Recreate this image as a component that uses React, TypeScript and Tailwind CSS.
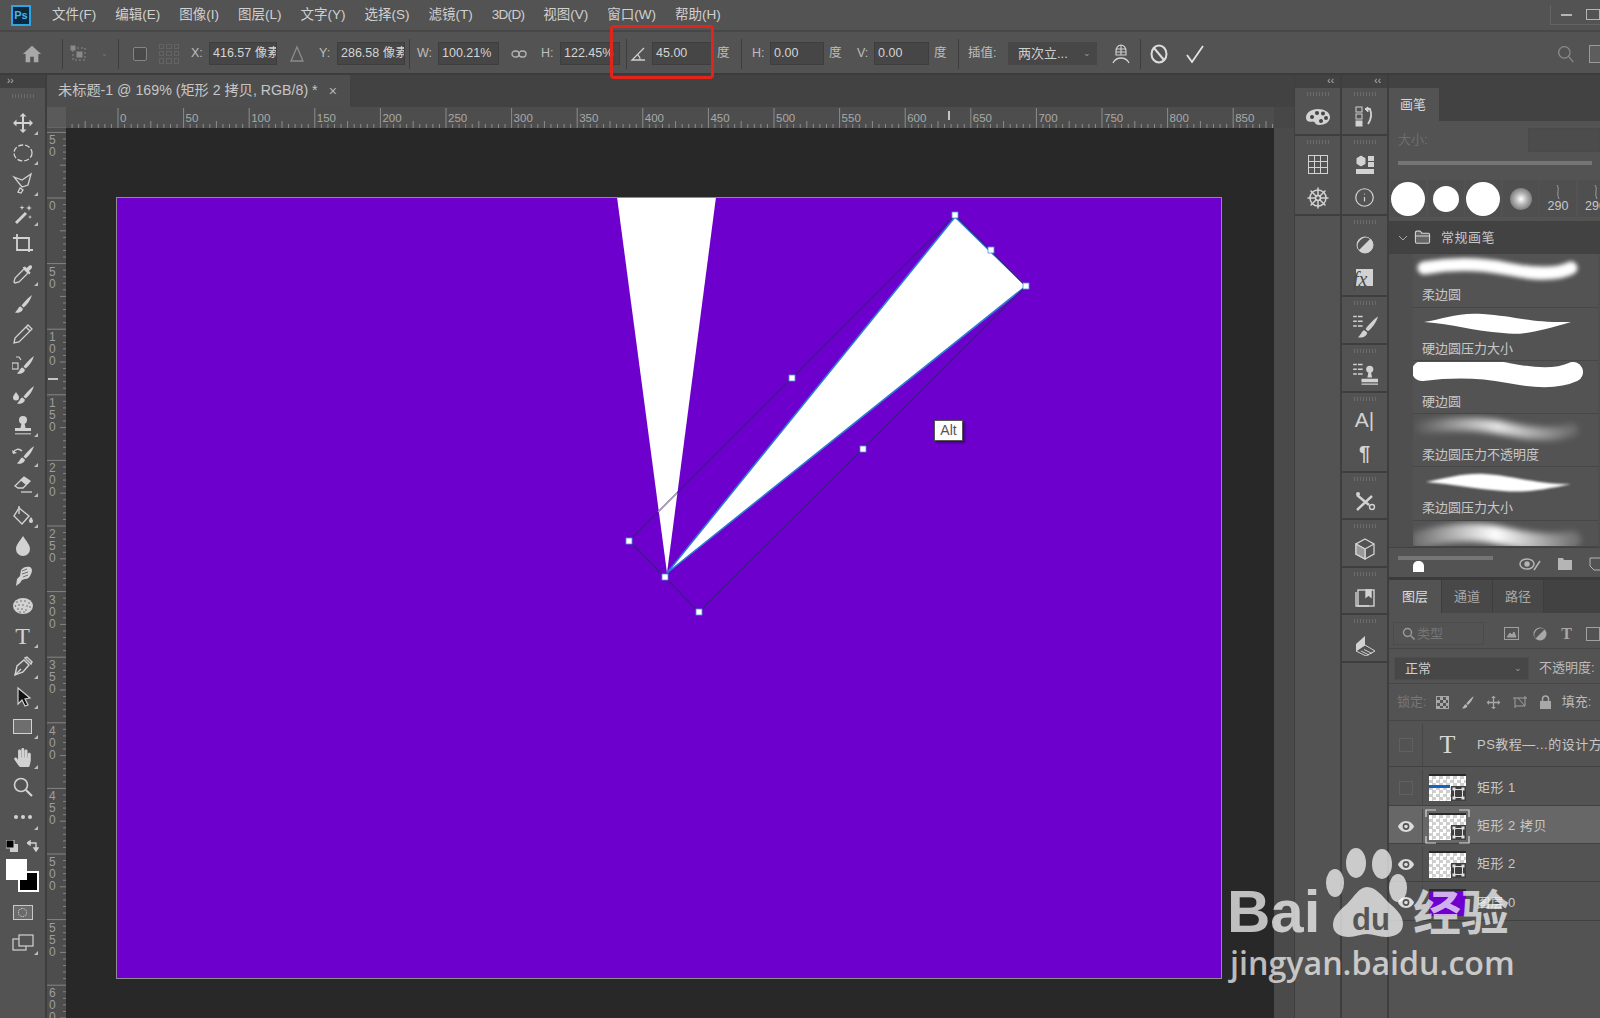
import React from 'react';
import { ShipWheel, Info, FolderClosed } from 'lucide-react';
import { FaHandPaper } from 'react-icons/fa';

const G = '#d2d2d2';

const Svg = ({ s = 22, children }: { s?: number; children: React.ReactNode }) => (
  <svg width={s} height={s} viewBox="0 0 22 22" fill="none" stroke="none">
    {children}
  </svg>
);

// shared brush shape, used by several tools
const BrushShape = ({ x = 0, y = 0 }: { x?: number; y?: number }) => (
  <g transform={`translate(${x} ${y})`}>
    <path d="M20 2 C17 4 12 9 9.5 12.5 L11.5 14.5 C15 12 18.5 7 20 2Z" fill={G} />
    <path d="M8.5 13.5 C6 14 6 17 3 19.5 C7 20.5 11 18.5 10.8 15.5Z" fill={G} />
  </g>
);

const tools: { icon: React.ReactNode; flag?: boolean }[] = [
  { flag: true, icon: <Svg><path d="M11 1l3.5 3.5H12V10h5.5V7.5L21 11l-3.5 3.5V12H12v5.5h2.5L11 21l-3.5-3.5H10V12H4.5v2.5L1 11l3.5-3.5V10H10V4.5H7.5z" fill={G} /></Svg> },
  { flag: true, icon: <Svg><ellipse cx="11" cy="11" rx="9" ry="8" stroke={G} strokeWidth="1.3" strokeDasharray="5 2" /></Svg> },
  { flag: true, icon: <Svg><path d="M2 5l8 3 9-6-3 11-6 2zM8 16l-2 4 3 1 2-3-3-2z" stroke={G} strokeWidth="1.3" /></Svg> },
  { flag: true, icon: <Svg><path d="M3 19l10-10 2 2-10 10z" fill={G} /><path d="M10 2l.6 2 2 .6-2 .6-.6 2-.6-2-2-.6 2-.6zM17 2l.8 2.3 2.2.7-2.2.7L17 8l-.8-2.3L14 5l2.2-.7zM18 12l.5 1.5 1.5.5-1.5.5-.5 1.5-.5-1.5L16 14l1.5-.5z" fill={G} /></Svg> },
  { icon: <Svg><path d="M1 5h16v14M5 1v16h16" stroke={G} strokeWidth="1.8" /></Svg> },
  { flag: true, icon: <Svg><path d="M12 6l4 4-9 9-4 1-1-1 1-4z" stroke={G} strokeWidth="1.3" /><path d="M10.500 4.500l7 7 1-2-1.500-1.500 2.500-2.500c1.500-2 0-4-2-3l-3 2.500-1.500-1.500z" fill={G} /></Svg> },
  { icon: <Svg><BrushShape /></Svg> },
  { icon: <Svg><path d="M16 2l4 4L7 19l-5 1 1-5zM14 4l4 4" stroke={G} strokeWidth="1.3" /></Svg> },
  { icon: <Svg><BrushShape x={2} /><rect x="0" y="9" width="6" height="6" stroke={G} strokeWidth="1.2" /><path d="M4 3h3l2 3" stroke={G} strokeWidth="1.2" /></Svg> },
  { icon: <Svg><BrushShape x={2} /><path d="M4 8c2 3 3 4 3 5.5a3 3 0 01-6 0C1 12 2 11 4 8z" fill={G} /></Svg> },
  { flag: true, icon: <Svg><circle cx="11" cy="6" r="4" fill={G} /><path d="M9.5 9h3l1 5h-5z" fill={G} /><path d="M3 14h16v3H3z" fill={G} /><path d="M3 19h16v1.5H3z" fill="#aaa" /></Svg> },
  { flag: true, icon: <Svg><BrushShape x={2} /><path d="M1 9c2-4 6-5 9-2" stroke={G} strokeWidth="1.3" /><path d="M0 6l1 4 4-1z" fill={G} /></Svg> },
  { flag: true, icon: <Svg><path d="M12 3l6 4-7 7H6L3 12z" stroke={G} strokeWidth="1.3" /><path d="M12 3l6 4-4 4-6-5z" fill={G} /><path d="M9 18h11" stroke={G} strokeWidth="1.3" /></Svg> },
  { flag: true, icon: <Svg><path d="M7 3l10 8-7 8-8-8z" stroke={G} strokeWidth="1.4" /><path d="M7 1v8" stroke={G} strokeWidth="1.4" /><path d="M19 12c1.4 2 2 3 2 4a2 2 0 01-4 0c0-1 .6-2 2-4z" fill={G} /></Svg> },
  { icon: <Svg><path d="M11 1c3 5 7 8.500 7 13a7 7 0 01-14 0c0-4.500 4-8 7-13z" fill={G} /></Svg> },
  { icon: <Svg><path d="M4 21l1-7 3-3 1-6c2-3 6-4 9-3 3 2 2 5 1 7-1 3-3 5-6 5l-3 1-2 3z" fill={G} /><path d="M10 6l5-2M10 9l6-2M11 12l5-2" stroke="#535353" strokeWidth="0.800" /></Svg> },
  { icon: <Svg><ellipse cx="11" cy="11" rx="10" ry="8" fill={G} /><path d="M5 7h.01M9 6h.01M13 6h.01M17 8h.01M3.500 11h.01M7 10h.01M11 10h.01M15 11h.01M18 12h.01M6 14h.01M10 14h.01M14 15h.01M8 17h.01M12 17h.01" stroke="#555" strokeWidth="1.400" strokeLinecap="round" /></Svg> },
  { flag: true, icon: <span className="font-['Liberation_Serif',serif] text-[#d2d2d2] text-[24px] leading-none">T</span> },
  { flag: true, icon: <Svg><path d="M3 20l2-9 7-6 5 5-6 7z" stroke={G} strokeWidth="1.4" /><path d="M13 3l2-1 5 5-1 2zM3 20l6-6" stroke={G} strokeWidth="1.4" /></Svg> },
  { flag: true, icon: <Svg><path d="M6 2l12 10-5 1 3 6-3 1-3-6-4 4z" fill="#111" stroke={G} strokeWidth="1.200" /></Svg> },
  { flag: true, icon: <div className="w-[19px] h-[15px] border border-[#d2d2d2] bg-[#6e6e6e]" /> },
  { flag: true, icon: <FaHandPaper size={19} color={G} /> },
  { icon: <Svg><circle cx="9" cy="9" r="6.500" stroke={G} strokeWidth="1.600" /><path d="M14 14l6 6" stroke={G} strokeWidth="2.200" /></Svg> },
  { flag: true, icon: <Svg><circle cx="4" cy="11" r="2" fill={G} /><circle cx="11" cy="11" r="2" fill={G} /><circle cx="18" cy="11" r="2" fill={G} /></Svg> },
];

const Flag = () => (
  <span className="absolute right-[7px] bottom-[3px] w-0 h-0 border-l-[4px] border-l-transparent border-b-[4px] border-b-[#bdbdbd]" />
);

const Grip = () => (
  <div className="w-[22px] h-[4px] bg-[repeating-linear-gradient(90deg,#6c6c6c_0,#6c6c6c_1px,transparent_1px,transparent_3px)]" />
);

const ToolColumn = () => (
  <div className="w-[47px] shrink-0 border-r-2 border-[#3d3d3d] bg-[#535353] flex flex-col">
    <div className="h-[13px] bg-[#424242] text-[10px] leading-[12px] text-[#bbb] pl-[7px]">››</div>
    <div className="h-[20px] pt-[6px] flex justify-center"><Grip /></div>
    {tools.map((t, i) => (
      <div key={i} className="relative h-[30.2px] shrink-0 flex items-center justify-center">
        {t.icon}
        {t.flag && <Flag />}
      </div>
    ))}
    <div className="h-[26px] shrink-0 flex items-center justify-between px-[6px]">
      <svg width="12" height="12" viewBox="0 0 12 12"><rect x="4" y="4" width="8" height="8" fill="#ccc" /><rect x="0" y="0" width="8" height="8" fill="#000" stroke="#ccc" /></svg>
      <svg width="12" height="12" viewBox="0 0 12 12" fill="none" stroke={G} strokeWidth="1.400"><path d="M1 3h8v7M0 3l3-2v4zM9 11l-2-3h4z" /></svg>
    </div>
    <div className="relative h-[33px] shrink-0">
      <div className="absolute left-[18px] top-[12px] w-[21px] h-[21px] bg-black border-2 border-white" />
      <div className="absolute left-[6px] top-0 w-[21px] h-[21px] bg-white" />
    </div>
    <div className="mt-[6px] h-[30px] flex items-center justify-center">
      <div className="w-[20px] h-[15px] border border-[#c8c8c8] bg-[#6a6a6a] flex items-center justify-center">
        <div className="w-[9px] h-[9px] rounded-full border border-dotted border-[#e0e0e0]" />
      </div>
    </div>
    <div className="relative h-[30px] flex items-center justify-center">
      <Svg><rect x="1" y="7" width="13" height="11" stroke={G} strokeWidth="1.200" /><rect x="7" y="3" width="14" height="11" fill="#535353" stroke={G} strokeWidth="1.200" /></Svg>
      <Flag />
    </div>
  </div>
);

const Field = ({ w, children }: { w: string; children?: React.ReactNode }) => (
  <div className={`${w} h-[23px] shrink-0 bg-[#464646] border border-[#3e3e3e] text-[#d4d4d4] text-[12.500px] leading-[21px] pl-[3px] overflow-hidden whitespace-nowrap`}>
    {children}
  </div>
);

const Sep = ({ m }: { m: string }) => <div className={`${m} w-px h-[30px] bg-[#3d3d3d] shrink-0`} />;

const Lbl = ({ m, w, children }: { m: string; w: string; children: React.ReactNode }) => (
  <span className={`${m} ${w} shrink-0 text-[12.500px] text-[#bdbdbd] whitespace-nowrap`}>{children}</span>
);

const OptionsBar = () => (
  <div className="h-[43px] shrink-0 flex items-center pt-[2px] bg-[#535353] border-b-2 border-[#3c3c3c]">
    <div className="ml-[22px] w-[20px] shrink-0">
      <Svg s={20}><path d="M11 2L1 11h3v9h5v-6h4v6h5v-9h3z" fill="#a8a8a8" /></Svg>
    </div>
    <Sep m="ml-[20px]" />
    <div className="ml-[7px] w-[18px] shrink-0">
      <svg width="18" height="18" viewBox="0 0 18 18" fill="none" stroke="#8a8a8a"><rect x="3" y="3" width="12" height="12" strokeDasharray="2 2" /><rect x="1" y="1" width="4" height="4" fill="#8a8a8a" /><rect x="7" y="7" width="5" height="5" fill="#8a8a8a" /></svg>
    </div>
    <div className="ml-[13px] w-[8px] shrink-0 text-[#777] text-[8px]">⌄</div>
    <Sep m="ml-[9px]" />
    <div className="ml-[14px] w-[14px] h-[14px] shrink-0 rounded-[2px] border border-[#858585] bg-[#4a4a4a]" />
    <div className="ml-[12px] w-[20px] h-[20px] shrink-0 grid grid-cols-3 gap-[2px] opacity-60">
      {Array.from({ length: 9 }).map((_, i) => (
        <div key={i} className="border border-[#6f6f6f]" />
      ))}
    </div>
    <Lbl m="ml-[12px]" w="w-[14px]">X:</Lbl>
    <div className="ml-[4px]"><Field w="w-[68px]">416.57 像素</Field></div>
    <div className="ml-[12px] w-[16px] shrink-0">
      <svg width="16" height="18" viewBox="0 0 16 18" fill="none" stroke="#8c8c8c" strokeWidth="1.300"><path d="M8 2L2 16h12z" /></svg>
    </div>
    <Lbl m="ml-[14px]" w="w-[14px]">Y:</Lbl>
    <div className="ml-[4px]"><Field w="w-[68px]">286.58 像素</Field></div>
    <Sep m="ml-[4px]" />
    <Lbl m="ml-[7px]" w="w-[18px]">W:</Lbl>
    <div className="ml-[3px]"><Field w="w-[61px]">100.21%</Field></div>
    <div className="ml-[12px] w-[16px] shrink-0">
      <svg width="16" height="10" viewBox="0 0 16 10" fill="none" stroke="#b4b4b4" strokeWidth="1.300"><rect x="1" y="2" width="7" height="6" rx="3" /><rect x="8" y="2" width="7" height="6" rx="3" /></svg>
    </div>
    <Lbl m="ml-[14px]" w="w-[14px]">H:</Lbl>
    <div className="ml-[5px]"><Field w="w-[60px]">122.45%</Field></div>
    <Sep m="ml-[6px]" />
    <div className="ml-[3px] w-[16px] shrink-0">
      <svg width="16" height="16" viewBox="0 0 16 16" fill="none" stroke="#d0d0d0" strokeWidth="1.300"><path d="M14 2L2 14h13M10 14a6 6 0 00-2-5" /></svg>
    </div>
    <div className="ml-[6px]"><Field w="w-[60px]">45.00</Field></div>
    <Lbl m="ml-[5px]" w="w-[14px]">度</Lbl>
    <Sep m="ml-[10px]" />
    <Lbl m="ml-[10px]" w="w-[14px]">H:</Lbl>
    <div className="ml-[4px]"><Field w="w-[54px]">0.00</Field></div>
    <Lbl m="ml-[5px]" w="w-[14px]">度</Lbl>
    <Lbl m="ml-[14px]" w="w-[13px]">V:</Lbl>
    <div className="ml-[4px]"><Field w="w-[55px]">0.00</Field></div>
    <Lbl m="ml-[5px]" w="w-[14px]">度</Lbl>
    <Sep m="ml-[10px]" />
    <Lbl m="ml-[9px]" w="w-[33px]">插值:</Lbl>
    <div className="ml-[7px] w-[89px] h-[23px] shrink-0 bg-[#474747] text-[13px] text-[#cfcfcf] leading-[23px] pl-[10px] relative">
      两次立...
      <span className="absolute right-[6px] top-0 text-[#9a9a9a] text-[9px]">⌄</span>
    </div>
    <div className="ml-[13px] w-[22px] shrink-0">
      <Svg>
        <path d="M6 8c0-3 2-6 5-6s5 3 5 6v4H6zM6 6h10M11 2v10M6 9h10" stroke={G} strokeWidth="1.100" />
        <path d="M3 20c2-4 4-5 8-5s6 1 8 5" stroke={G} strokeWidth="1.300" />
      </Svg>
    </div>
    <Sep m="ml-[8px]" />
    <div className="ml-[8px] w-[20px] shrink-0">
      <svg width="20" height="20" viewBox="0 0 20 20" fill="none" stroke="#dcdcdc" strokeWidth="2"><ellipse cx="10" cy="10" rx="7.500" ry="8.500" /><path d="M5 4l10 12" /></svg>
    </div>
    <div className="ml-[16px] w-[20px] shrink-0">
      <svg width="20" height="20" viewBox="0 0 20 20" fill="none" stroke="#e4e4e4" strokeWidth="1.800"><path d="M2 11l5 7L18 2" /></svg>
    </div>
    <div className="ml-auto flex items-center">
      <Svg s={18}><circle cx="9" cy="9" r="7" stroke="#8d8d8d" strokeWidth="1.500" /><path d="M14 14l6 7" stroke="#8d8d8d" strokeWidth="1.500" /></Svg>
      <div className="ml-[14px] -mr-[3px] w-[14px] h-[18px] border border-[#9a9a9a] bg-[#5d5d5d]" />
    </div>
  </div>
);

const MENU = ['文件(F)', '编辑(E)', '图像(I)', '图层(L)', '文字(Y)', '选择(S)', '滤镜(T)', '3D(D)', '视图(V)', '窗口(W)', '帮助(H)'];

const MenuBar = () => (
  <div className="h-[32px] shrink-0 flex items-center bg-[#535353] border-b-2 border-[#474747]">
    <div className="ml-[11px] w-[20px] h-[21px] border-2 border-[#2fa3e6] bg-[#0b2a3e] text-[#4cb5f0] text-[11px] font-bold leading-[17px] text-center">Ps</div>
    <div className="ml-[21px] flex gap-[19px] text-[13.500px] text-[#d0d0d0]">
      {MENU.map((m) => (
        <span key={m} className={`whitespace-nowrap ${m === '3D(D)' ? 'tracking-[-0.700px]' : ''}`}>{m}</span>
      ))}
    </div>
    <div className="ml-auto flex items-center h-[20px] border-l border-b border-[#636363] pl-[10px] gap-[14px]">
      <div className="w-[11px] h-[2px] bg-[#b5b5b5]" />
      <div className="w-[14px] h-[11px] border border-[#b5b5b5]" />
    </div>
  </div>
);

const H_STEP = 65.6;
const H_ZERO = 52;

const HRuler = () => {
  const ticks: React.ReactNode[] = [];
  for (let i = -8; i < 180; i++) {
    const x = H_ZERO + i * (H_STEP / 10);
    const major = i % 10 === 0;
    const mid = Math.abs(i % 10) === 5;
    ticks.push(<line key={i} x1={x} x2={x} y1={major ? 1 : mid ? 14 : 17} y2={21} stroke="#8c8c8c" />);
  }
  const labels: React.ReactNode[] = [];
  for (let i = 0; i <= 17; i++) {
    labels.push(
      <text key={i} x={H_ZERO + i * H_STEP + 2} y={15} fill="#a9a9a9" fontSize="11.500">{i * 50}</text>,
    );
  }
  return (
    <div className="h-[21px] shrink-0 flex bg-[#4d4d4d]">
      <div className="w-[19px] shrink-0 bg-[#5a5a5a] border-b border-[#666]" />
      <svg width="1208" height="21" className="shrink-0">
        {ticks}
        {labels}
        <line x1={883} x2={883} y1={4} y2={13} stroke="#ededed" strokeWidth="1.500" />
      </svg>
      <div className="flex-1 bg-[#474747]" />
    </div>
  );
};

const VRuler = () => {
  const zero = 70;
  const step = 65.6;
  const ticks: React.ReactNode[] = [];
  for (let i = -10; i < 140; i++) {
    const y = zero + i * (step / 10);
    const major = i % 10 === 0;
    const mid = Math.abs(i % 10) === 5;
    ticks.push(<line key={i} y1={y} y2={y} x1={major ? 0 : mid ? 13 : 16} x2={19} stroke="#858585" />);
  }
  const labels: React.ReactNode[] = [];
  for (let i = -1; i <= 12; i++) {
    const digits = String(Math.abs(i) * 50).split('');
    digits.forEach((d, j) => {
      labels.push(
        <text key={`${i}-${j}`} x={2} y={zero + i * step + 12 + j * 12} fill="#9d9d9d" fontSize="12">{d}</text>,
      );
    });
  }
  return (
    <svg width="19" height="890" className="shrink-0 bg-[#4d4d4d]">
      {ticks}
      {labels}
      <line x1={1} x2={11} y1={251} y2={251} stroke="#ededed" strokeWidth="1.500" />
    </svg>
  );
};

const Handle = ({ x, y }: { x: number; y: number }) => (
  <rect x={x - 3} y={y - 3} width="6" height="6" fill="#fff" stroke="#4f8fdc" strokeWidth="0.800" />
);

// coordinates are relative to the document's top left corner
const DocumentArt = () => (
  <svg width="1104" height="780" className="absolute inset-0">
    <g transform="translate(-1 -1)">
      <polygon points="501,0 600,0 551,376" fill="#fff" />
      <polygon points="551,376 839,20 910,89" fill="#fff" stroke="#2c7bd6" strokeWidth="1.600" />
      <polyline points="513,344 839,18 910,89 583,415 513,344" fill="none" stroke="#3f1a8a" strokeWidth="1.300" />
      <line x1="542" y1="315" x2="561" y2="296" stroke="#aaa" strokeWidth="1.200" />
      <Handle x={839} y={18} />
      <Handle x={875} y={53} />
      <Handle x={910} y={89} />
      <Handle x={676} y={181} />
      <Handle x={747} y={252} />
      <Handle x={513} y={344} />
      <Handle x={549} y={380} />
      <Handle x={583} y={415} />
    </g>
  </svg>
);

const CenterColumn = () => (
  <div className="w-[1247px] shrink-0 flex flex-col bg-[#424242]">
    <div className="h-[32px] shrink-0 flex">
      <div className="w-[303px] bg-[#4e4e4e] flex items-center pl-[11px] pr-[13px] text-[14.200px] text-[#c6c6c6]">
        <span className="whitespace-nowrap">未标题-1 @ 169% (矩形 2 拷贝, RGB/8) *</span>
        <span className="ml-auto text-[#b5b5b5] text-[14px]">×</span>
      </div>
    </div>
    <HRuler />
    <div className="flex-1 flex overflow-hidden">
      <VRuler />
      <div className="w-[1208px] shrink-0 bg-[#282828] pl-[51px] pt-[70px]">
        <div className="relative w-[1104px] h-[780px] bg-[#6e00cd] outline outline-1 outline-[#8f8f8f]">
          <DocumentArt />
          <div className="absolute left-[817px] top-[222px] w-[29px] h-[21px] bg-white border border-[#555] shadow-[2px_2px_2px_rgba(0,0,0,0.4)] text-[14px] text-[#555] leading-[19px] text-center">Alt</div>
        </div>
      </div>
      <div className="flex-1 bg-[#4a4a4a]" />
    </div>
  </div>
);

const IconGroup = ({ h, items }: { h: string; items: React.ReactNode[] }) => (
  <div className={`${h} shrink-0 flex flex-col items-center pt-[4px] border-b-2 border-[#3e3e3e]`}>
    <Grip />
    <div className="h-[4px]" />
    {items.map((it, i) => (
      <div key={i} className="h-[33px] flex items-center justify-center">{it}</div>
    ))}
  </div>
);

const ListBrush = ({ stamp }: { stamp?: boolean }) => (
  <Svg s={26}>
    <path d="M1 3h3M1 7h3M1 11h3" stroke={G} strokeWidth="1.200" />
    <path d="M5 3h4M5 7h4M5 11h4" stroke={G} strokeWidth="1.200" />
    {stamp ? (
      <g><circle cx="15" cy="7" r="3" fill={G} /><path d="M14 9h2l1 5h-4zM8 15h14v3H8zM8 19h14v1H8z" fill={G} /></g>
    ) : (
      <BrushShape x={2} y={1} />
    )}
  </Svg>
);

const ColumnA = () => (
  <div className="w-[45px] shrink-0 flex flex-col">
    <div className="h-[13px] shrink-0 bg-[#424242] text-[#bbb] text-[10px] leading-[12px] text-right pr-[6px]">‹‹</div>
    <IconGroup h="h-[48px]" items={[
      <svg width="24" height="18" viewBox="0 0 24 18" key="p">
        <path d="M12 1C5 1 0 5 0 9.500 0 14 4 14 7 13.500c2 0 2 3.500 6 3.500 6 0 11-3 11-8S18 1 12 1z" fill={G} />
        <circle cx="6" cy="9" r="2" fill="#444" /><circle cx="11" cy="5" r="2" fill="#444" /><circle cx="17" cy="5.500" r="2" fill="#444" /><circle cx="20" cy="10" r="2" fill="#444" /><circle cx="15" cy="13" r="2" fill="#444" />
      </svg>,
    ]} />
    <IconGroup h="h-[80px]" items={[
      <div key="g" className="w-[20px] h-[19px] grid grid-cols-3 gap-px border border-[#d2d2d2] bg-[#d2d2d2]">
        {Array.from({ length: 9 }).map((_, i) => <div key={i} className="bg-[#535353]" />)}
      </div>,
      <ShipWheel key="s" size={24} color={G} strokeWidth={1.5} />,
    ]} />
  </div>
);

const ColumnB = () => (
  <div className="w-[45px] shrink-0 flex flex-col">
    <div className="h-[13px] shrink-0 bg-[#424242] text-[#bbb] text-[10px] leading-[12px] text-right pr-[6px]">‹‹</div>
    <IconGroup h="h-[48px]" items={[
      <svg width="20" height="21" viewBox="0 0 20 21" key="h" fill="none" stroke={G}>
        <rect x="1" y="1" width="6" height="5" /><rect x="1" y="8" width="6" height="5" /><rect x="1" y="15" width="6" height="5" fill={G} />
        <path d="M10 3h5c2 5 2 9-2 15" strokeWidth="1.800" /><path d="M13 1l-3 2 3 3z" fill={G} />
      </svg>,
    ]} />
    <IconGroup h="h-[80px]" items={[
      <svg width="20" height="20" viewBox="0 0 20 20" key="c" fill={G}>
        <path d="M1 3l5-3 5 3v6l-5 3-5-3z" stroke="#535353" />
        <rect x="13" y="1" width="6" height="5" /><rect x="13" y="7" width="6" height="5" /><rect x="1" y="14" width="18" height="5" />
      </svg>,
      <Info key="i" size={21} color={G} strokeWidth={1.400} />,
    ]} />
    <IconGroup h="h-[81px]" items={[
      <svg width="18" height="18" viewBox="0 0 18 18" key="a"><circle cx="9" cy="9" r="8" fill={G} stroke={G} /><path d="M3 14L14 3A8 8 0 003 14z" fill="#535353" /></svg>,
      <div key="f" className="relative w-[17px] h-[17px] bg-[#d2d2d2]">
        <span className="absolute -left-[3px] top-[-1px] text-[20px] italic text-[#4c4c4c] font-['Liberation_Serif',serif] leading-[22px]">fx</span>
      </div>,
    ]} />
    <IconGroup h="h-[48px]" items={[<ListBrush key="b" />]} />
    <IconGroup h="h-[48px]" items={[<ListBrush key="s" stamp />]} />
    <IconGroup h="h-[80px]" items={[
      <span key="a" className="text-[21px] -mt-[4px] text-[#d2d2d2] leading-none">A<span className="font-light">|</span></span>,
      <span key="p" className="text-[20px] -mt-[4px] text-[#d2d2d2] leading-none font-bold">¶</span>,
    ]} />
    <IconGroup h="h-[47px]" items={[
      <svg width="22" height="22" viewBox="0 0 22 22" key="t" fill="none" stroke={G} strokeWidth="2.400"><path d="M3 19L18 5M3 4l12 10" /><circle cx="18" cy="16" r="2.500" strokeWidth="1.400" /><circle cx="4" cy="3" r="2" fill={G} stroke="none" /></svg>,
    ]} />
    <IconGroup h="h-[48px]" items={[
      <svg width="20" height="22" viewBox="0 0 20 22" key="c" stroke={G} strokeWidth="1.300" fill="none"><path d="M10 1l9 5v10l-9 5-9-5V6z" /><path d="M10 11l9-5M10 11L1 6M10 11v10" /><path d="M10 11L1 6v10l9 5z" fill="#9a9a9a" /></svg>,
    ]} />
    <IconGroup h="h-[47px]" items={[
      <svg width="20" height="20" viewBox="0 0 20 20" key="l" fill="none" stroke={G} strokeWidth="1.400"><rect x="3" y="3" width="16" height="16" /><path d="M1 5v14h13" /><path d="M11 3h5v7l-2.500-2L11 10z" fill={G} /></svg>,
    ]} />
    <IconGroup h="h-[48px]" items={[
      <svg width="24" height="24" viewBox="0 0 24 24" key="b"><path d="M3 12l9-8v9l-9 6z" fill={G} /><path d="M3 19l9-6 10 6-9 5z" fill="none" stroke={G} strokeWidth="1" /><path d="M8 19l8 4M11 17.500l8 4" stroke={G} /></svg>,
    ]} />
  </div>
);

const brushRows: { label: string; h: string; art: React.ReactNode }[] = [
  {
    label: '柔边圆', h: 'h-[54px]',
    art: <svg width="185" height="32" viewBox="0 0 185 32" className="blur-[2px]"><path d="M11 13C40 8 70 9 95 14s50 6 63-1" fill="none" stroke="#fff" strokeWidth="13" strokeLinecap="round" /></svg>,
  },
  {
    label: '硬边圆压力大小', h: 'h-[53px]',
    art: <svg width="185" height="32" viewBox="0 0 185 32"><path d="M11 13C30 10 45 3 70 5c30 2 50 9 88 8-28 8-48 14-68 11C60 22 40 15 11 13z" fill="#fff" /></svg>,
  },
  {
    label: '硬边圆', h: 'h-[53px]',
    art: <svg width="185" height="32" viewBox="0 0 185 32"><path d="M9 9C40 5 70 6 95 11s50 6 65 -1" fill="none" stroke="#fff" strokeWidth="20" strokeLinecap="round" /></svg>,
  },
  {
    label: '柔边圆压力不透明度', h: 'h-[53px]',
    art: (
      <svg width="185" height="32" viewBox="0 0 185 32" className="blur-[3px]">
        <defs><linearGradient id="fadeA"><stop offset="0" stopColor="#fff" stopOpacity="0.100" /><stop offset="0.500" stopColor="#fff" stopOpacity="0.850" /><stop offset="1" stopColor="#fff" stopOpacity="0.150" /></linearGradient></defs>
        <path d="M10 12C40 8 70 8 95 14s50 6 64 1" fill="none" stroke="url(#fadeA)" strokeWidth="13" strokeLinecap="round" />
      </svg>
    ),
  },
  {
    label: '柔边圆压力大小', h: 'h-[54px]',
    art: <svg width="185" height="32" viewBox="0 0 185 32" className="blur-[1px]"><path d="M13 14C35 10 50 5 72 6c30 2 50 10 86 10-28 6-48 9-68 7C60 21 40 16 13 14z" fill="#fff" /></svg>,
  },
  {
    label: '', h: 'h-[26px]',
    art: (
      <svg width="185" height="32" viewBox="0 0 185 32" className="blur-[3px]">
        <defs><linearGradient id="fadeB"><stop offset="0" stopColor="#fff" stopOpacity="0.200" /><stop offset="0.500" stopColor="#fff" stopOpacity="1" /><stop offset="1" stopColor="#fff" stopOpacity="0.200" /></linearGradient></defs>
        <path d="M6 18C40 8 70 9 95 15s50 7 64 3" fill="none" stroke="url(#fadeB)" strokeWidth="18" strokeLinecap="round" />
      </svg>
    ),
  },
];

const PresetCell = ({ children }: { children?: React.ReactNode }) => (
  <div className="w-[36px] h-[37px] shrink-0 bg-[#4f4f4f] flex flex-col items-center justify-center">{children}</div>
);

const Stroke290 = () => (
  <>
    <svg width="6" height="14" viewBox="0 0 6 14" fill="none" stroke="#9e9e9e"><path d="M2 0c3 4-1 8 2 14" /></svg>
    <span className="text-[12.500px] leading-[14px] text-[#c8c8c8]">290</span>
  </>
);

const BrushPanel = () => (
  <div className="flex flex-col">
    <div className="h-[33px] shrink-0 flex bg-[#424242]">
      <div className="w-[50px] bg-[#535353] text-[13px] text-[#d8d8d8] leading-[33px] pl-[11px]">画笔</div>
    </div>
    <div className="h-[59px] shrink-0 flex flex-col">
      <div className="mt-[7px] h-[24px] flex items-center">
        <span className="ml-[9px] text-[13px] text-[#6f6f6f]">大小:</span>
        <div className="ml-auto w-[72px] h-full bg-[#4c4c4c] border border-[#4a4a4a]" />
      </div>
      <div className="mt-[9px] ml-[9px] w-[194px] h-[4px] bg-[#757575]" />
    </div>
    <div className="h-[41px] shrink-0 flex gap-[1.500px] pl-px">
      <PresetCell><div className="w-[34px] h-[34px] rounded-full bg-white blur-[0.500px]" /></PresetCell>
      <PresetCell><div className="w-[26px] h-[26px] rounded-full bg-white blur-[0.500px]" /></PresetCell>
      <PresetCell><div className="w-[34px] h-[34px] rounded-full bg-white blur-[0.500px]" /></PresetCell>
      <PresetCell><div className="w-[22px] h-[22px] rounded-full bg-[radial-gradient(circle,#fff_0,#b0b0b0_40%,#4f4f4f_100%)]" /></PresetCell>
      <PresetCell><Stroke290 /></PresetCell>
      <PresetCell><Stroke290 /></PresetCell>
    </div>
    <div className="h-[33px] shrink-0 bg-[#424242] flex items-center text-[13px] text-[#c8c8c8]">
      <svg className="ml-[9px]" width="10" height="6" viewBox="0 0 10 6" fill="none" stroke="#aaa"><path d="M1 1l4 4 4-4" /></svg>
      <FolderClosed className="ml-[6px]" size={17} color="#d4d4d4" fill="#d4d4d4" fillOpacity={0.25} strokeWidth={1.500} />
      <span className="ml-[10px] tracking-[0.500px]">常规画笔</span>
    </div>
    <div className="h-[293px] shrink-0 overflow-hidden pl-[24px] bg-[#4f4f4f]">
      {brushRows.map((r, i) => (
        <div key={i} className={`${r.h} w-[185px] bg-[#535353] border-b border-[#474747] flex flex-col overflow-hidden`}>
          <div className="h-[32px] shrink-0 pt-[1px]">{r.art}</div>
          {r.label && <div className="pl-[9px] text-[13px] text-[#c8c8c8] leading-[17px] whitespace-nowrap">{r.label}</div>}
        </div>
      ))}
    </div>
    <div className="relative h-[33px] shrink-0 border-t border-[#424242] border-b-[3px] border-b-[#3b3b3b]">
      <div className="absolute left-[9px] top-[8px] w-[95px] h-[4px] bg-[#757575]" />
      <div className="absolute left-[24px] top-[13px] w-[11px] h-[11px] bg-white rounded-t-[5px]" />
      <div className="absolute left-[130px] top-[9px] flex items-center gap-[16px]">
        <svg width="22" height="14" viewBox="0 0 22 14" fill="none" stroke="#b5b5b5" strokeWidth="1.500"><ellipse cx="8" cy="7" rx="7" ry="5" /><circle cx="8" cy="7" r="2" fill="#b5b5b5" /><path d="M15 13l6-9" /></svg>
        <svg width="16" height="14" viewBox="0 0 16 14" fill="#b5b5b5"><path d="M1 1h5l1 2h8v10H1z" /></svg>
        <svg width="16" height="14" viewBox="0 0 16 14" fill="none" stroke="#b5b5b5"><path d="M1 1h14v12H5l-4-4z" /></svg>
      </div>
    </div>
  </div>
);

const Checker = "bg-[conic-gradient(#cfcfcf_25%,#fff_0_50%,#cfcfcf_0_75%,#fff_0)] bg-[length:7px_7px]";

const Thumb = ({ line, purple }: { line?: boolean; purple?: boolean }) => (
  <div className={`relative w-[37px] h-[27px] shrink-0 border-t-2 border-[#2a2a2a] ${purple ? 'bg-[#6e00cd]' : Checker}`}>
    {line && <div className="absolute left-0 top-[9px] w-[21px] h-[3px] bg-[#1263c4]" />}
    {!purple && (
      <div className="absolute right-0 bottom-0 w-[15px] h-[15px] bg-[#3f3f3f] flex items-center justify-center">
        <svg width="13" height="13" viewBox="0 0 13 13" fill="none" stroke="#e0e0e0"><rect x="2.500" y="2.500" width="8" height="8" /><rect x="1" y="1" width="2" height="2" fill="#e0e0e0" /><rect x="10" y="1" width="2" height="2" fill="#e0e0e0" /><rect x="1" y="10" width="2" height="2" fill="#e0e0e0" /><rect x="10" y="10" width="2" height="2" fill="#e0e0e0" /></svg>
      </div>
    )}
  </div>
);

const Eye = () => (
  <svg width="16" height="11" viewBox="0 0 16 11"><path d="M8 0C4 0 1 3 0 5.500 1 8 4 11 8 11s7-3 8-5.500C15 3 12 0 8 0z" fill="#dcdcdc" /><circle cx="8" cy="5.500" r="3.400" fill="#535353" /><circle cx="8" cy="5.500" r="1.800" fill="#dcdcdc" /></svg>
);

const LayerRow = ({ h, name, eye, selected, thumb }: { h: string; name: string; eye?: boolean; selected?: boolean; thumb: React.ReactNode }) => (
  <div className={`${h} flex items-center pt-[3px] border-b border-[#414141] ${selected ? 'bg-[#676767]' : ''}`}>
    <div className="w-[34px] h-full shrink-0 border-r border-[#474747] flex items-center justify-center">
      {eye ? <Eye /> : <div className="w-[14px] h-[14px] border border-[#606060]" />}
    </div>
    <div className="ml-[6px] w-[37px] shrink-0 flex justify-center">{thumb}</div>
    <span className="ml-[11px] text-[13px] text-[#c8c8c8] tracking-[0.500px] whitespace-nowrap">{name}</span>
  </div>
);

const LayersPanel = () => (
  <div className="flex-1 flex flex-col overflow-hidden">
    <div className="h-[33px] shrink-0 flex bg-[#424242] text-[13px] leading-[33px] text-center">
      <div className="w-[52px] bg-[#535353] text-[#dcdcdc]">图层</div>
      <div className="w-[51px] bg-[#484848] border-l border-[#3d3d3d] text-[#a8a8a8]">通道</div>
      <div className="w-[52px] bg-[#484848] border-x border-[#3d3d3d] text-[#a8a8a8]">路径</div>
    </div>
    <div className="h-[36px] shrink-0 flex items-center pt-[6px] border-b border-[#464646]">
      <div className="ml-[4px] w-[99px] h-[23px] border border-[#4b4b4b] flex items-center text-[13px] text-[#757575]">
        <svg className="ml-[8px]" width="13" height="13" viewBox="0 0 13 13" fill="none" stroke="#9a9a9a" strokeWidth="1.400"><circle cx="5.500" cy="5.500" r="4" /><path d="M8.500 8.500l4 4" /></svg>
        <span className="ml-[2px]">类型</span>
      </div>
      <div className="ml-[20px] flex items-center gap-[14px]">
        <svg width="15" height="13" viewBox="0 0 15 13" fill="none" stroke="#a0a0a0"><rect x="0.500" y="0.500" width="14" height="12" /><path d="M3 10l3-4 2 2 2-3 2 5z" fill="#a0a0a0" /></svg>
        <svg width="14" height="14" viewBox="0 0 14 14"><circle cx="7" cy="7" r="6.500" fill="#a8a8a8" /><path d="M2.500 11.500L11.500 2.500A6.500 6.500 0 002.500 11.500z" fill="#535353" /></svg>
        <span className="font-['Liberation_Serif',serif] font-bold text-[16px] text-[#a8a8a8] leading-none">T</span>
        <div className="w-[14px] h-[14px] border border-[#a0a0a0]" />
      </div>
    </div>
    <div className="h-[35px] shrink-0 flex items-center pt-[4px] border-b border-[#464646]">
      <div className="ml-[5px] w-[135px] h-[23px] bg-[#474747] border border-[#4d4d4d] text-[13px] leading-[21px] pl-[10px] text-[#cfcfcf] relative">
        正常
        <span className="absolute right-[6px] top-0 text-[#9a9a9a] text-[9px]">⌄</span>
      </div>
      <span className="ml-[10px] text-[13px] text-[#bbb] whitespace-nowrap">不透明度:</span>
    </div>
    <div className="h-[36px] shrink-0 flex items-center text-[13px] whitespace-nowrap">
      <span className="ml-[8px] text-[#777]">锁定:</span>
      <div className="ml-[9px] flex items-center gap-[11px]">
        <div className="w-[13px] h-[13px] shrink-0 bg-[conic-gradient(#a8a8a8_25%,#555_0_50%,#a8a8a8_0_75%,#555_0)] bg-[length:6px_6px] border border-[#a8a8a8]" />
        <svg className="shrink-0" width="15" height="15" viewBox="0 0 22 22"><g opacity="0.800"><BrushShape /></g></svg>
        <svg className="shrink-0" width="15" height="15" viewBox="0 0 22 22"><path d="M11 1l3.500 3.500H12V10h5.500V7.500L21 11l-3.500 3.500V12H12v5.500h2.500L11 21l-3.500-3.500H10V12H4.500v2.500L1 11l3.500-3.500V10H10V4.500H7.500z" fill="#a8a8a8" /></svg>
        <svg className="shrink-0" width="16" height="14" viewBox="0 0 16 14" fill="none" stroke="#a0a0a0"><path d="M3 3h10v8H3zM1 3h2M13 3h2M3 11v2M13 1v2M6 3l7 8" /></svg>
        <svg className="shrink-0" width="13" height="14" viewBox="0 0 13 14"><rect x="1" y="6" width="11" height="8" fill="#a8a8a8" /><path d="M3.500 6V4a3 3 0 016 0v2" fill="none" stroke="#a8a8a8" strokeWidth="1.500" /></svg>
      </div>
      <span className="ml-[10px] text-[#bbb]">填充:</span>
    </div>
    <div className="flex-1 border-t border-[#464646]">
      <LayerRow h="h-[46px]" name="PS教程—...的设计方法" thumb={<span className="font-['Liberation_Serif',serif] text-[26px] text-[#d8d8d8] leading-none">T</span>} />
      <LayerRow h="h-[39px]" name="矩形 1" thumb={<Thumb line />} />
      <LayerRow h="h-[38px]" name="矩形 2 拷贝" eye selected thumb={
        <div className="relative">
          <Thumb />
          <svg className="absolute -left-[4px] -top-[4px]" width="45" height="35" viewBox="0 0 45 35" fill="none" stroke="#d8d8d8" strokeWidth="1.200">
            <path d="M1 8V1h10M34 1h10v7M1 27v7h10M34 34h10v-7" />
          </svg>
        </div>
      } />
      <LayerRow h="h-[38px]" name="矩形 2" eye thumb={<Thumb />} />
      <LayerRow h="h-[39px]" name="图层 0" eye thumb={<Thumb purple />} />
    </div>
  </div>
);

const RightPanels = () => (
  <div className="flex-1 flex bg-[#535353] border-l border-[#3e3e3e] overflow-hidden">
    <ColumnA />
    <div className="w-[2px] shrink-0 bg-[#3e3e3e]" />
    <ColumnB />
    <div className="w-[2px] shrink-0 bg-[#3e3e3e]" />
    <div className="w-[211px] shrink-0 flex flex-col">
      <div className="h-[13px] shrink-0 bg-[#424242]" />
      <BrushPanel />
      <LayersPanel />
    </div>
  </div>
);

const Watermark = () => (
  <div className="absolute left-[1227px] top-[845px] w-[293px] h-[145px] text-white/70 pointer-events-none">
    <span className="absolute left-0 top-[32px] font-['Liberation_Sans',sans-serif] font-bold text-[60px] leading-[69px]">Bai</span>
    <svg className="absolute left-[96px] top-0" width="90" height="95" viewBox="0 0 90 95" fill="#fff" fillOpacity="0.7">
      <ellipse cx="12" cy="38" rx="9" ry="14" />
      <ellipse cx="33" cy="18" rx="10" ry="15" />
      <ellipse cx="59" cy="19" rx="10" ry="15" />
      <ellipse cx="75" cy="43" rx="9" ry="14" />
      <path d="M44 42c-8 0-13 10-20 17-7 6-14 12-14 21 0 8 7 12 16 12 6 0 12-3 18-3 6 0 12 3 19 3 10 0 17-5 17-13 0-9-7-15-14-21-7-7-13-16-22-16z" />
    </svg>
    <span className="absolute left-[125px] top-[57px] font-['Liberation_Sans',sans-serif] font-bold text-[31px] leading-[36px] text-[#555]">du</span>
    <span className="absolute left-[186px] top-[34px] font-['Noto_Sans_CJK_SC',sans-serif] font-bold text-[48px] leading-[60px] whitespace-nowrap">经验</span>
    <span className="absolute left-[3px] top-[96px] font-['Open_Sans',sans-serif] font-semibold text-[32.200px] leading-[44px] whitespace-nowrap">jingyan.baidu.com</span>
  </div>
);

export default function App() {
  return (
    <div className="relative w-[1600px] h-[1018px] overflow-hidden bg-[#535353] flex flex-col font-['Liberation_Sans','Noto_Sans_CJK_SC',sans-serif]">
      <MenuBar />
      <OptionsBar />
      <div className="flex-1 flex overflow-hidden">
        <ToolColumn />
        <CenterColumn />
        <RightPanels />
      </div>
      <div className="absolute left-[610px] top-[25px] w-[104px] h-[54px] border-[3px] border-[#e3241b] rounded-[4px]" />
      <Watermark />
    </div>
  );
}
